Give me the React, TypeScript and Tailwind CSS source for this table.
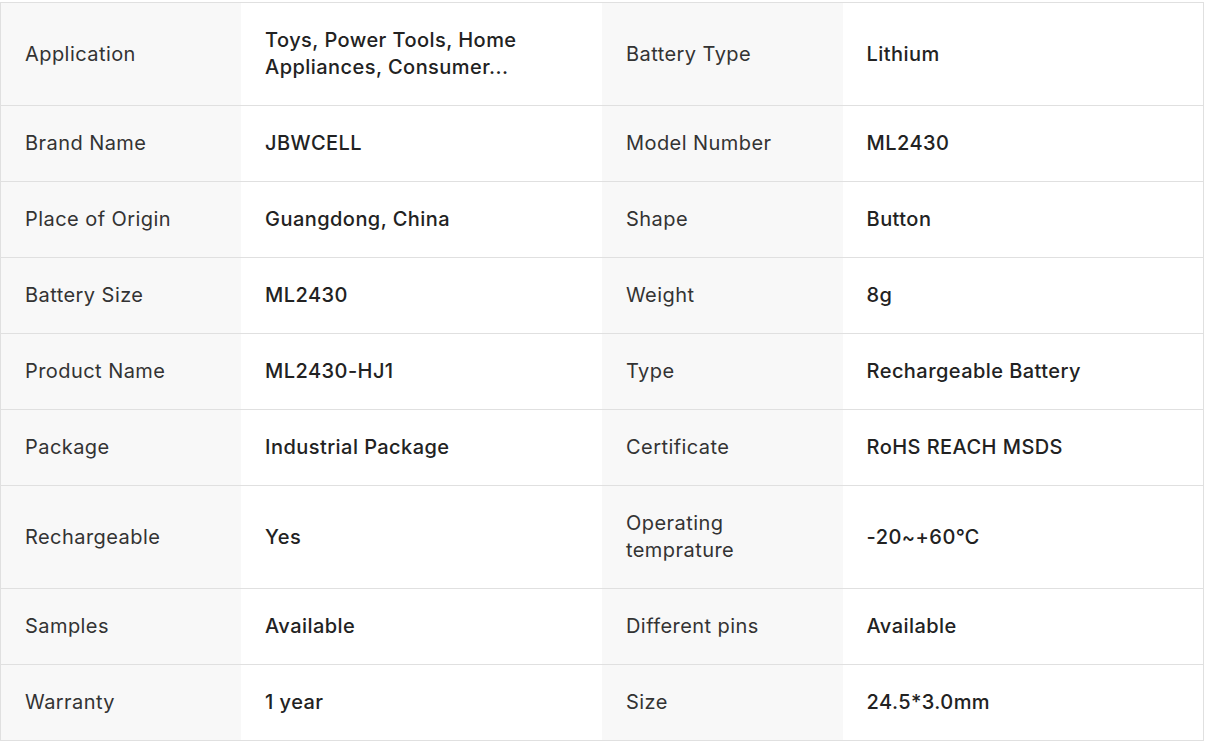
import React from 'react';

type Spec = { label: string; value: string };

const rows: [Spec, Spec][] = [
  [{ label: 'Application', value: 'Toys, Power Tools, Home Appliances, Consumer...' }, { label: 'Battery Type', value: 'Lithium' }],
  [{ label: 'Brand Name', value: 'JBWCELL' }, { label: 'Model Number', value: 'ML2430' }],
  [{ label: 'Place of Origin', value: 'Guangdong, China' }, { label: 'Shape', value: 'Button' }],
  [{ label: 'Battery Size', value: 'ML2430' }, { label: 'Weight', value: '8g' }],
  [{ label: 'Product Name', value: 'ML2430-HJ1' }, { label: 'Type', value: 'Rechargeable Battery' }],
  [{ label: 'Package', value: 'Industrial Package' }, { label: 'Certificate', value: 'RoHS REACH MSDS' }],
  [{ label: 'Rechargeable', value: 'Yes' }, { label: 'Operating temprature', value: '-20~+60℃' }],
  [{ label: 'Samples', value: 'Available' }, { label: 'Different pins', value: 'Available' }],
  [{ label: 'Warranty', value: '1 year' }, { label: 'Size', value: '24.5*3.0mm' }],
];

const App: React.FC = () => {
  return (
    <div className="bg-white pt-[2px] w-[1204px]" style={{ fontFamily: 'Inter, "Noto Sans", sans-serif' }}>
      <table className="w-full table-fixed border-collapse border border-[#e0e0e0] text-[20px] leading-[27px] tracking-[0.44px]">
        <colgroup>
          <col className="w-[20%]" />
          <col className="w-[30%]" />
          <col className="w-[20%]" />
          <col className="w-[30%]" />
        </colgroup>
        <tbody>
          {rows.map((pair, idx) => (
            <tr key={idx} className="border-b border-[#e0e0e0]">
              {pair.map(cell => (
                <React.Fragment key={cell.label}>
                  <td className="bg-[#f8f8f8] pl-[24px] pr-[25px] py-[24px] align-middle text-[#333]">
                    {cell.label}
                  </td>
                  <td className="pl-[24px] pr-[25px] py-[24px] align-middle font-medium text-[#222]">
                    {cell.value}
                  </td>
                </React.Fragment>
              ))}
            </tr>
          ))}
        </tbody>
      </table>
    </div>
  );
};

export default App;
